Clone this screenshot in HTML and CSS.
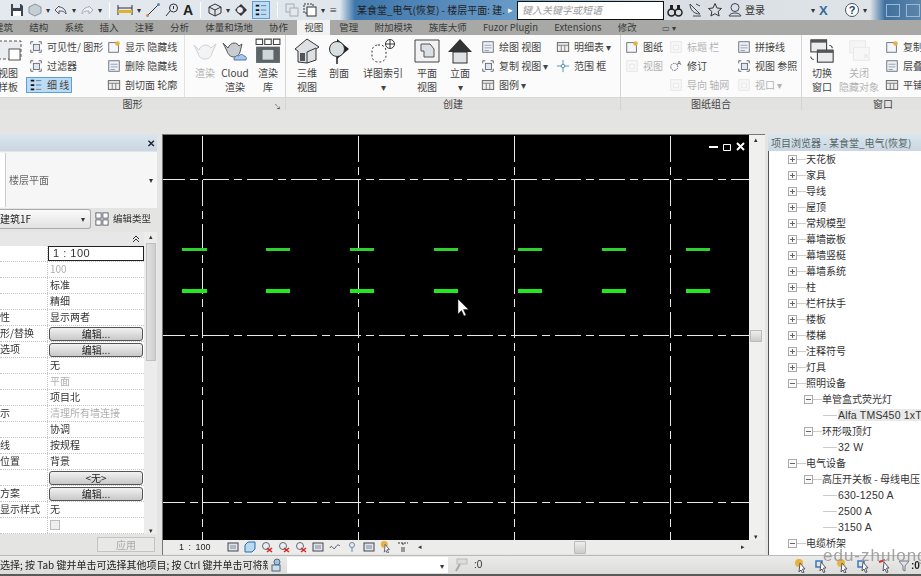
FILE: index.html
```html
<!DOCTYPE html>
<html lang="zh">
<head>
<meta charset="utf-8">
<title>Revit</title>
<link rel="stylesheet" href="styles.css">
</head>
<body>
<svg class="defs" width="0" height="0">
  <symbol id="doc" viewBox="0 0 16 16"><rect x="2" y="2" width="12" height="12" fill="#eef2f6" stroke="#667"/><path d="M4 6h8M4 9h8M4 12h5" stroke="#89a" fill="none"/></symbol>
  <symbol id="docy" viewBox="0 0 16 16"><rect x="2" y="3" width="11" height="11" fill="#f4f6f8" stroke="#667"/><circle cx="12" cy="4" r="2.6" fill="#e8b23c"/></symbol>
  <symbol id="docd" viewBox="0 0 16 16"><rect x="2" y="2" width="12" height="12" fill="#f5f5f5" stroke="#c4c4c4"/><path d="M5 6h6v5H5z" fill="none" stroke="#ccc"/></symbol>
  <symbol id="frame" viewBox="0 0 16 16"><path d="M2 5V2h3M11 2h3v3M14 11v3h-3M5 14H2v-3" fill="none" stroke="#556"/><rect x="5" y="5" width="7" height="7" fill="#dfe7ee" stroke="#667"/></symbol>
  <symbol id="lines" viewBox="0 0 16 16"><path d="M2 3h4M2 8h4M2 13h4" stroke="#111" stroke-width="2"/><path d="M8 3h6M8 8h6M8 13h6" stroke="#579" /></symbol>
  <symbol id="table" viewBox="0 0 16 16"><rect x="1.500" y="3" width="13" height="10" fill="#eee" stroke="#555"/><path d="M1.500 6h13M6 6v7M10 6v7" stroke="#777"/></symbol>
  <symbol id="teapot" viewBox="0 0 26 22"><path d="M2 5l5 5c1-3 4-5 6-5s5 1 6 3l5-4-4 9c-1 4-3 6-7 6s-6-2-7-6z" fill="#e4e8ea" stroke="#8a9296"/></symbol>
  <symbol id="teapotc" viewBox="0 0 26 24"><path d="M1 4l5 5c1-3 4-5 6-5s4 1 5 3l3-2-2 8c-1 3-3 5-6 5s-6-2-7-6z" fill="#c6ccd0" stroke="#555"/><path d="M12 20c1-3 3-4 5-3 1-2 4-2 5 0 2 0 3 2 2 4H12z" fill="#a9c6ea" stroke="#57a"/></symbol>
  <symbol id="lib" viewBox="0 0 24 24"><path d="M1 1h6v5H1zM9 1h6v5H9zM17 1h6v5h-6z" fill="#fff" stroke="#444"/><rect x="1" y="8" width="22" height="15" fill="#5d6468"/><rect x="7" y="11" width="10" height="9" fill="#cfd6da"/></symbol>
  <symbol id="house" viewBox="0 0 26 26"><path d="M13 1L1 11l3 2v11l9 1 9-3V11l3-2z" fill="#dde1e3" stroke="#333"/><path d="M13 14v11M13 14l9-4" stroke="#333" fill="none"/><rect x="6" y="15" width="5" height="8" fill="#555"/></symbol>
  <symbol id="section" viewBox="0 0 24 26"><path d="M10 1l12 10-12 10z" fill="#222"/><circle cx="10" cy="11" r="7.500" fill="#d9dee0" stroke="#333"/><path d="M10 19v7" stroke="#222" stroke-width="1.500"/></symbol>
  <symbol id="callout" viewBox="0 0 26 26"><rect x="2" y="7" width="14" height="17" rx="6" fill="none" stroke="#333" stroke-dasharray="2 2"/><circle cx="20" cy="6" r="4.500" fill="#fff" stroke="#333"/><path d="M15.500 6h9M20 2v8" stroke="#333"/></symbol>
  <symbol id="plan" viewBox="0 0 26 24"><path d="M1 1h24v22H1z" fill="#f2f2f2" stroke="#444"/><path d="M7 5h9l4 5v8H10v-6H7z" fill="#d9dfe4" stroke="#555"/></symbol>
  <symbol id="elev" viewBox="0 0 26 26"><path d="M13 1L1 14h5v11h14V14h5z" fill="#333"/><rect x="6" y="14" width="14" height="11" fill="#dfe3e6" stroke="#333"/></symbol>
  <symbol id="switch" viewBox="0 0 28 28"><rect x="2" y="2" width="17" height="13" fill="#e9edf0" stroke="#222"/><rect x="2" y="2" width="17" height="3" fill="#555"/><rect x="9" y="13" width="17" height="13" fill="#e9edf0" stroke="#222"/><rect x="9" y="13" width="17" height="3" fill="#555"/><path d="M22 8c2 0 3 1 3 3M2 20c0 2 1 3 3 3" fill="none" stroke="#111"/></symbol>
  <symbol id="closew" viewBox="0 0 28 28"><rect x="4" y="3" width="17" height="13" fill="#eee" stroke="#ccc"/><rect x="8" y="10" width="17" height="14" fill="#f2f2f2" stroke="#ccc"/><path d="M19 17l5 5M24 17l-5 5" stroke="#bbb"/></symbol>
  <symbol id="plus" viewBox="0 0 9 9"><rect x=".5" y=".5" width="8" height="8" fill="#fafafa" stroke="#aaa"/><path d="M2 4.500h5M4.500 2v5" stroke="#666"/></symbol>
  <symbol id="minus" viewBox="0 0 9 9"><rect x=".5" y=".5" width="8" height="8" fill="#fafafa" stroke="#aaa"/><path d="M2 4.500h5" stroke="#666"/></symbol>
  <symbol id="cursor" viewBox="0 0 14 14"><circle cx="5" cy="4" r="4" fill="#e8b23c"/><path d="M6 4l5 6H8.500L10 13.500l-1.500.5L7 11l-2 2z" fill="#fff" stroke="#556"/></symbol>
  <symbol id="cursorb" viewBox="0 0 14 14"><path d="M1 2h6v6H1z" fill="none" stroke="#3a78c4" stroke-width="1.500"/><path d="M6 3l5 6H8.500L10 13l-1.500.5L7 10l-2 2z" fill="#fff" stroke="#556"/></symbol>
  <symbol id="cursorr" viewBox="0 0 14 14"><path d="M1 3l6-2" stroke="#c33" stroke-width="2"/><path d="M6 3l5 6H8.500L10 13l-1.500.5L7 10l-2 2z" fill="#fff" stroke="#556"/></symbol>
  <symbol id="vb" viewBox="0 0 12 12"><rect x="1" y="2" width="10" height="8" fill="#dde4ea" stroke="#445"/><path d="M3 5h6M3 7h6" stroke="#889"/></symbol>
  <symbol id="vbx" viewBox="0 0 12 12"><circle cx="5" cy="5" r="3.500" fill="#e9eef2" stroke="#667"/><path d="M6 7l5 4M11 7l-5 4" stroke="#d22" stroke-width="1.500"/></symbol>
</svg>

<header class="titlebar">
  <div class="qat">
    <svg class="i14" viewBox="0 0 14 14"><path d="M1 1h10l2 2v10H1z" fill="#3d4650"/><rect x="3" y="1" width="7" height="4" fill="#dfe6ec"/><rect x="3" y="8" width="8" height="5" fill="#fff"/></svg>
    <svg class="i14" viewBox="0 0 14 14"><path d="M7 1l6 3v6l-6 3-6-3V4z" fill="#c6ced4" stroke="#8a949c"/></svg>
    <span class="dot">▾</span>
    <svg class="i14" viewBox="0 0 14 14"><path d="M5 3L1 7l4 4V8c3 0 5 0 7 3 0-4-3-7-7-7z" fill="#e8edf1" stroke="#556"/></svg>
    <span class="dot">▾</span>
    <svg class="i14" viewBox="0 0 14 14"><path d="M9 3l4 4-4 4V8c-3 0-5 0-7 3 0-4 3-7 7-7z" fill="#eef1f4" stroke="#aab"/></svg>
    <span class="dot">▾</span>
    <span class="qsep"></span>
    <svg class="i16" viewBox="0 0 16 16"><path d="M1 3v10M15 3v10M1 6h14" stroke="#333" fill="none"/><rect x="1" y="8" width="14" height="3" fill="#e0b030"/></svg>
    <span class="dot">▾</span>
    <svg class="i16" viewBox="0 0 16 16"><path d="M2 14L14 2" stroke="#333"/><circle cx="2.500" cy="13.500" r="1.500" fill="#d84"/><circle cx="13.500" cy="2.500" r="1.500" fill="#68a"/></svg>
    <svg class="i14" viewBox="0 0 14 14"><circle cx="8.500" cy="5" r="4" fill="none" stroke="#333"/><path d="M5 8l-4 5" stroke="#333"/><path d="M8.500 3v3" stroke="#333"/></svg>
    <span class="qa">A</span>
    <span class="qsep"></span>
    <svg class="i14" viewBox="0 0 14 14"><path d="M7 1l6 3v6l-6 3-6-3V4z" fill="#e0e4e8" stroke="#333"/><path d="M1 4l6 3 6-3M7 7v6" stroke="#333" fill="none"/></svg>
    <span class="dot">▾</span>
    <svg class="i14" viewBox="0 0 14 14"><path d="M7 1l6 6-6 6-6-6z" fill="#333"/><circle cx="6" cy="7" r="3.500" fill="#eee" stroke="#333"/></svg>
    <span class="qon"><svg class="i14" viewBox="0 0 16 16"><use href="#lines"/></svg></span>
    <span class="qsep"></span>
    <svg class="i14" viewBox="0 0 14 14"><rect x="1" y="1" width="8" height="8" fill="none" stroke="#aab"/><rect x="5" y="5" width="8" height="8" fill="#e4e8ea" stroke="#aab"/></svg>
    <svg class="i14" viewBox="0 0 14 14"><rect x="1" y="1" width="9" height="9" fill="none" stroke="#333" stroke-dasharray="2 1"/><rect x="4" y="4" width="9" height="9" fill="#fff" stroke="#333"/></svg>
    <span class="dot">▾</span>
    <span class="dot">≡</span>
  </div>
  <div class="wintitle">某食堂_电气(恢复) - 楼层平面: 建...</div>
  <div class="search">
    <span class="tri">▸</span>
    <div class="searchbox">键入关键字或短语</div>
  </div>
  <div class="tright">
    <svg class="i16" viewBox="0 0 16 16"><circle cx="4.500" cy="10.500" r="3.500" fill="none" stroke="#222" stroke-width="1.500"/><circle cx="11.500" cy="10.500" r="3.500" fill="none" stroke="#222" stroke-width="1.500"/><path d="M3 3h3v5H3zM10 3h3v5h-3z" fill="#222"/></svg>
    <svg class="i16" viewBox="0 0 16 16"><path d="M3 2c0 6 4 10 10 10z" fill="none" stroke="#445"/><path d="M6 14h8M9 2l4 2" stroke="#445"/></svg>
    <svg class="i16" viewBox="0 0 16 16"><path d="M8 1.500l2 4.500 4.500.5-3.400 3 1 4.500L8 11.700 3.900 14l1-4.500-3.400-3L6 6z" fill="none" stroke="#333"/></svg>
    <svg class="i16" viewBox="0 0 16 16"><circle cx="8" cy="5.500" r="4" fill="none" stroke="#445"/><path d="M2 14c1-4 11-4 12 0z" fill="none" stroke="#445"/></svg>
    <span class="login">登录</span>
    <span class="dot">▾</span>
    <span class="xlogo">X</span>
    <span class="help">?</span>
    <span class="dot">▾</span>
  </div>
  <div class="winbtns"><span class="winmin"></span><span class="winmax"></span></div>
</header>

<nav class="tabs">
  <span>建筑</span><span>结构</span><span>系统</span><span>插入</span><span>注释</span><span>分析</span><span>体量和场地</span><span>协作</span><span class="tab-on">视图</span><span>管理</span><span>附加模块</span><span>族库大师</span><span>Fuzor Plugin</span><span>Extensions</span><span>修改</span><span class="tabopt">▭ ▾</span>
</nav>

<section class="ribbon">
  <div class="panel p-graphics">
    <div class="pbody">
      <div class="big w-tpl"><svg class="bigi" viewBox="0 0 26 26"><rect x="1" y="3" width="22" height="18" fill="#e9edf0" stroke="#555" stroke-dasharray="3 2"/><rect x="11" y="11" width="11" height="11" fill="#fff" stroke="#555"/></svg><span>视图<br>样板</span></div>
      <div class="col w-vis">
        <div class="it"><svg class="i14"><use href="#frame"/></svg>可见性/ 图形</div>
        <div class="it"><svg class="i14"><use href="#frame"/></svg>过滤器</div>
        <div class="it it-on"><svg class="i14"><use href="#lines"/></svg>细 线</div>
      </div>
      <div class="col w-hid">
        <div class="it"><svg class="i14"><use href="#docy"/></svg>显示 隐藏线</div>
        <div class="it"><svg class="i14"><use href="#doc"/></svg>删除 隐藏线</div>
        <div class="it"><svg class="i14"><use href="#table"/></svg>剖切面 轮廓</div>
      </div>
      <span class="vsep"></span>
      <div class="big w-r1 off"><svg class="bigi" viewBox="0 0 26 22"><use href="#teapot"/></svg><span>渲染</span></div>
      <div class="big w-r2"><svg class="bigi" viewBox="0 0 26 24"><use href="#teapotc"/></svg><span>Cloud<br>渲染</span></div>
      <div class="big w-r3"><svg class="bigi" viewBox="0 0 24 24"><use href="#lib"/></svg><span>渲染<br>库</span></div>
    </div>
    <div class="plabel lab-graphics">图形<i class="launch">↘</i></div>
  </div>
  <div class="panel p-create">
    <div class="pbody">
      <div class="big w-3d"><svg class="bigi" viewBox="0 0 26 26"><use href="#house"/></svg><span>三维<br>视图</span></div>
      <div class="big w-sec"><svg class="bigi" viewBox="0 0 24 26"><use href="#section"/></svg><span>剖面</span></div>
      <div class="big w-call"><svg class="bigi" viewBox="0 0 26 26"><use href="#callout"/></svg><span>详图索引<br>▾</span></div>
      <div class="big w-plan"><svg class="bigi" viewBox="0 0 26 24"><use href="#plan"/></svg><span>平面<br>视图</span></div>
      <div class="big w-elev"><svg class="bigi" viewBox="0 0 26 26"><use href="#elev"/></svg><span>立面<br>▾</span></div>
      <div class="col w-draw">
        <div class="it"><svg class="i14"><use href="#doc"/></svg>绘图 视图</div>
        <div class="it"><svg class="i14"><use href="#frame"/></svg>复制 视图 ▾</div>
        <div class="it"><svg class="i14"><use href="#table"/></svg>图例 ▾</div>
      </div>
      <div class="col w-sched">
        <div class="it"><svg class="i14"><use href="#table"/></svg>明细表 ▾</div>
        <div class="it"><svg class="i14" viewBox="0 0 16 16"><path d="M8 1v14M1 8h14" stroke="#48a"/><circle cx="8" cy="8" r="2" fill="#fff" stroke="#48a"/></svg>范围 框</div>
      </div>
    </div>
    <div class="plabel">创建</div>
  </div>
  <div class="panel p-sheet">
    <div class="pbody">
      <div class="col w-s1">
        <div class="it"><svg class="i14"><use href="#docy"/></svg>图纸</div>
        <div class="it off"><svg class="i14"><use href="#docd"/></svg>视图</div>
      </div>
      <div class="col w-s2">
        <div class="it off"><svg class="i14"><use href="#docd"/></svg>标题 栏</div>
        <div class="it"><svg class="i14" viewBox="0 0 16 16"><path d="M2 9a4 4 0 1 0 8 0a4 4 0 1 0-8 0" fill="none" stroke="#555" stroke-dasharray="2 1"/><text class="rev" x="9" y="7">A</text></svg>修订</div>
        <div class="it off"><svg class="i14"><use href="#docd"/></svg>导向 轴网</div>
      </div>
      <div class="col w-s3">
        <div class="it"><svg class="i14"><use href="#doc"/></svg>拼接线</div>
        <div class="it"><svg class="i14"><use href="#frame"/></svg>视图 参照</div>
        <div class="it off"><svg class="i14"><use href="#docd"/></svg>视口 ▾</div>
      </div>
    </div>
    <div class="plabel">图纸组合</div>
  </div>
  <div class="panel p-win">
    <div class="pbody">
      <div class="big w-sw"><svg class="bigi" viewBox="0 0 28 28"><use href="#switch"/></svg><span>切换<br>窗口</span></div>
      <div class="big w-cl off"><svg class="bigi" viewBox="0 0 28 28"><use href="#closew"/></svg><span>关闭<br>隐藏对象</span></div>
      <div class="col w-w3">
        <div class="it"><svg class="i14"><use href="#docy"/></svg>复制</div>
        <div class="it"><svg class="i14"><use href="#doc"/></svg>层叠</div>
        <div class="it"><svg class="i14"><use href="#table"/></svg>平铺</div>
      </div>
    </div>
    <div class="plabel lab-win">窗口</div>
  </div>
</section>

<div class="band"></div>

<main class="main">
  <aside class="props">
    <div class="phead"><b class="pclose">✕</b></div>
    <div class="ptype"><span class="pthumb"></span><span class="ptname">楼层平面</span><span class="dot">▾</span></div>
    <div class="pcombo">
      <div class="combo"><span>建筑1F</span><span class="dot">▾</span></div>
      <svg class="i14" viewBox="0 0 16 16"><rect x="1" y="1" width="6" height="6" fill="#fff" stroke="#556"/><rect x="9" y="1" width="6" height="6" fill="#fff" stroke="#556"/><rect x="1" y="9" width="6" height="6" fill="#fff" stroke="#556"/><rect x="9" y="9" width="6" height="6" fill="#fff" stroke="#556"/></svg>
      <span class="etype">编辑类型</span>
    </div>
    <div class="ptable">
      <div class="rows">
        <div class="sect"><svg class="chev" viewBox="0 0 8 8"><path d="M1 4l3-3 3 3M1 7l3-3 3 3" fill="none" stroke="#333"/></svg></div>
        <div class="row"><span class="k"></span><span class="v v-box">1 : 100</span></div>
        <div class="row"><span class="k"></span><span class="v off">100</span></div>
        <div class="row"><span class="k"></span><span class="v">标准</span></div>
        <div class="row"><span class="k"></span><span class="v">精细</span></div>
        <div class="row"><span class="k">性</span><span class="v">显示两者</span></div>
        <div class="row"><span class="k">形/替换</span><span class="v"><button class="btn">编辑...</button></span></div>
        <div class="row"><span class="k">选项</span><span class="v"><button class="btn">编辑...</button></span></div>
        <div class="row"><span class="k"></span><span class="v">无</span></div>
        <div class="row"><span class="k"></span><span class="v off">平面</span></div>
        <div class="row"><span class="k"></span><span class="v">项目北</span></div>
        <div class="row"><span class="k">示</span><span class="v off">清理所有墙连接</span></div>
        <div class="row"><span class="k"></span><span class="v">协调</span></div>
        <div class="row"><span class="k">线</span><span class="v">按规程</span></div>
        <div class="row"><span class="k">位置</span><span class="v">背景</span></div>
        <div class="row"><span class="k"></span><span class="v"><button class="btn">&lt;无&gt;</button></span></div>
        <div class="row"><span class="k">方案</span><span class="v"><button class="btn">编辑...</button></span></div>
        <div class="row"><span class="k">显示样式</span><span class="v">无</span></div>
        <div class="row"><span class="k"></span><span class="v"><i class="check"></i></span></div>
      </div>
      <div class="vscroll"><span class="up">▴</span><span class="thumb"></span><span class="dn">▾</span></div>
    </div>
    <div class="pfoot"><button class="apply">应用</button></div>
  </aside>

  <section class="center">
    <div class="canvaswrap">
      <div class="canvas">
        <svg class="draw" viewBox="0 0 587 405">
          <g class="gv">
            <path d="M39.500 1V405"/><path d="M195.500 1V405"/><path d="M351.500 1V405"/><path d="M507.500 1V405"/>
          </g>
          <g class="gh">
            <path d="M0 44.500H587"/><path d="M0 200.500H587"/><path d="M0 367.500H587"/>
          </g>
          <g class="lamp1">
            <path d="M19 114.500h25M103 114.500h24M187 114.500h24M271 114.500h24M355 114.500h24M439 114.500h24M523 114.500h24"/>
          </g>
          <g class="lamp2">
            <path d="M19 156h25M103 156h24M187 156h24M271 156h24M355 156h24M439 156h24M523 156h24"/>
          </g>
          <path class="mouse" d="M295 164v15l3.500-3.500 2.500 5.500 2-1-2.500-5.500h5z"/>
          <g class="vctl">
            <path d="M546 12h9"/><path class="vthin" d="M560.500 9.500h7v6h-7z"/><path d="M574 8l7 7M581 8l-7 7"/>
          </g>
        </svg>
      </div>
      <div class="hs-v"><span class="up">▴</span><span class="vthumb"></span><span class="dn">▾</span></div>
    </div>
    <div class="viewbar">
      <span class="scale">1 : 100</span>
      <div class="vbicons">
        <svg class="i12"><use href="#vb"/></svg><svg class="i12" viewBox="0 0 12 12"><path d="M1 4l3-3h7v7l-3 3H1z" fill="#bcd7f0" stroke="#1f6fb0"/></svg><svg class="i12"><use href="#vbx"/></svg><svg class="i12"><use href="#vbx"/></svg><svg class="i12"><use href="#vbx"/></svg><svg class="i12"><use href="#vb"/></svg><svg class="i12" viewBox="0 0 12 12"><path d="M1 7c2-5 3 3 5 0s3-4 5-2" fill="none" stroke="#556"/></svg><svg class="i12" viewBox="0 0 12 12"><circle cx="6" cy="4" r="2.500" fill="none" stroke="#68a"/><path d="M6 7v4" stroke="#68a"/></svg><svg class="i12"><use href="#vb"/></svg><svg class="i12"><use href="#cursor"/></svg><svg class="i12" viewBox="0 0 12 12"><path d="M1 2h10M6 2v3" stroke="#333" stroke-dasharray="2 1"/><rect x="4" y="6" width="4" height="5" fill="#999"/></svg>
        <span class="vbarrow">◂</span>
      </div>
      <span class="hthumb"></span>
      <span class="vbright">▸</span>
    </div>
  </section>

  <aside class="browser">
    <div class="bhead">项目浏览器 - 某食堂_电气(恢复)</div>
    <div class="tree">
      <div class="n l1"><svg class="ex"><use href="#plus"/></svg><i class="ln"></i>天花板</div>
      <div class="n l1"><svg class="ex"><use href="#plus"/></svg><i class="ln"></i>家具</div>
      <div class="n l1"><svg class="ex"><use href="#plus"/></svg><i class="ln"></i>导线</div>
      <div class="n l1"><svg class="ex"><use href="#plus"/></svg><i class="ln"></i>屋顶</div>
      <div class="n l1"><svg class="ex"><use href="#plus"/></svg><i class="ln"></i>常规模型</div>
      <div class="n l1"><svg class="ex"><use href="#plus"/></svg><i class="ln"></i>幕墙嵌板</div>
      <div class="n l1"><svg class="ex"><use href="#plus"/></svg><i class="ln"></i>幕墙竖梃</div>
      <div class="n l1"><svg class="ex"><use href="#plus"/></svg><i class="ln"></i>幕墙系统</div>
      <div class="n l1"><svg class="ex"><use href="#plus"/></svg><i class="ln"></i>柱</div>
      <div class="n l1"><svg class="ex"><use href="#plus"/></svg><i class="ln"></i>栏杆扶手</div>
      <div class="n l1"><svg class="ex"><use href="#plus"/></svg><i class="ln"></i>楼板</div>
      <div class="n l1"><svg class="ex"><use href="#plus"/></svg><i class="ln"></i>楼梯</div>
      <div class="n l1"><svg class="ex"><use href="#plus"/></svg><i class="ln"></i>注释符号</div>
      <div class="n l1"><svg class="ex"><use href="#plus"/></svg><i class="ln"></i>灯具</div>
      <div class="n l1"><svg class="ex"><use href="#minus"/></svg><i class="ln"></i>照明设备</div>
      <div class="n l2"><svg class="ex"><use href="#minus"/></svg><i class="ln"></i>单管盒式荧光灯</div>
      <div class="n l3"><i class="ln ln3"></i><span class="sel">Alfa TMS450 1xTL5 - 14 W</span></div>
      <div class="n l2"><svg class="ex"><use href="#minus"/></svg><i class="ln"></i>环形吸顶灯</div>
      <div class="n l3"><i class="ln ln3"></i>32 W</div>
      <div class="n l1"><svg class="ex"><use href="#minus"/></svg><i class="ln"></i>电气设备</div>
      <div class="n l2"><svg class="ex"><use href="#minus"/></svg><i class="ln"></i>高压开关板 - 母线电压</div>
      <div class="n l3"><i class="ln ln3"></i>630-1250 A</div>
      <div class="n l3"><i class="ln ln3"></i>2500 A</div>
      <div class="n l3"><i class="ln ln3"></i>3150 A</div>
      <div class="n l1"><svg class="ex"><use href="#minus"/></svg><i class="ln"></i>电缆桥架</div>
    </div>
  </aside>
</main>

<footer class="status">
  <span class="stext">选择; 按 Tab 键并单击可选择其他项目; 按 Ctrl 键并单击可将新</span>
  <svg class="i14" viewBox="0 0 14 14"><circle cx="9" cy="4" r="3" fill="#9bc3e8" stroke="#567"/><rect x="4" y="7" width="8" height="6" fill="#cde" stroke="#567"/></svg>
  <div class="sinput"><span class="dot">▾</span></div>
  <svg class="i14 sfilter" viewBox="0 0 14 14"><rect x="3" y="1" width="10" height="5" fill="#ddd" stroke="#bbb"/><path d="M2 13l4-7" stroke="#aaa" stroke-width="2"/></svg>
  <span class="zero">:0</span>
  <div class="sright">
    <svg class="i14"><use href="#cursor"/></svg>
    <svg class="i14"><use href="#cursorb"/></svg>
    <svg class="i14"><use href="#cursor"/></svg>
    <svg class="i14"><use href="#cursorb"/></svg>
    <svg class="i14"><use href="#cursorr"/></svg>
    <svg class="i10" viewBox="0 0 10 12"><path d="M0 1h10L6 6v5L4 10V6z" fill="#dfe3e6" stroke="#778"/></svg>
    <span class="zero0">:0</span>
  </div>
</footer>
<div class="base"></div>
<span class="water">edu-zhulong</span>
</body>
</html>
```

FILE: styles.css
```css
* { box-sizing: border-box; }
html, body { margin: 0; padding: 0; }
body {
  width: 921px; height: 576px; overflow: hidden; position: relative;
  background: #e4e4e2; color: #333;
  font: 10px/1.2 "Noto Sans CJK SC", "Liberation Sans", sans-serif;
  filter: blur(.35px);
}
.defs { position: absolute; }
svg { display: block; flex: none; }
.i10 { width: 10px; height: 12px; }
.i12 { width: 12px; height: 12px; }
.i14 { width: 14px; height: 14px; }
.i16 { width: 16px; height: 16px; }
.dot { font-size: 8px; color: #333; }
.off { opacity: .4; }

/* title bar */
.titlebar {
  height: 20px; display: flex; align-items: center; overflow: hidden;
  background: linear-gradient(90deg, #e3e9ee 0, #dfe6ec 340px, #3e76ab 355px, #6a9cc8 520px, #d8dee4 664px, #dfe4e8 870px, #3e6f9f 885px, #5c85ab 921px);
}
.qat { width: 355px; flex: none; display: flex; align-items: center; gap: 4px; padding-left: 10px; overflow: hidden; }
.qsep { width: 1px; height: 16px; background: #fff; margin: 0 3px; }
.qa { font: bold 14px "Liberation Sans", sans-serif; color: #222; }
.qon { background: #bfdcf5; border: 1px solid #5d9bd0; display: flex; padding: 1px; }
.wintitle { width: 150px; flex: none; padding-left: 2px; white-space: nowrap; overflow: hidden; color: #222; }
.search { width: 159px; flex: none; display: flex; align-items: center; gap: 4px; color: #223; padding-left: 3px; }
.tri { font-size: 9px; color: #fff; }
.searchbox { flex: 1; height: 19px; background: #fff; border: 1px solid #111; font-style: italic; color: #999; padding: 2px 4px; }
.tright { flex: none; width: 216px; display: flex; align-items: center; gap: 4px; padding-left: 3px; }
.login { width: 62px; margin-left: -2px; }
.xlogo { font: bold 13px "Liberation Sans", sans-serif; color: #356a9c; width: 22px; text-align: left; }
.help { width: 14px; height: 14px; border-radius: 50%; border: 1px solid #456; text-align: center; font: bold 11px/12px "Liberation Sans", sans-serif; color: #246; background: #fff; }
.winbtns { flex: 1; display: flex; align-items: center; gap: 6px; padding-left: 6px; }
.winmin { width: 14px; height: 13px; border: 1px solid #9fb8cf; }
.winmax { width: 14px; height: 13px; border: 1px solid #9fb8cf; }

/* tabs */
.tabs {
  height: 15px; display: flex; align-items: center; gap: 16.2px; margin-left: -6px; width: 927px;
  background: #a8a9a6; color: #3a3a3a; white-space: nowrap; font-size: 9.5px;
}
.tabs span { flex: none; }
.tab-on { background: #f2f2f2; height: 15px; line-height: 15px; padding: 0 7px; margin: 0 -7px; }
.tabopt { margin-left: 9px; font-size: 8px; }

/* ribbon */
.ribbon { height: 75px; display: flex; background: #f6f6f6; overflow: hidden; }
.panel { flex: none; display: flex; flex-direction: column; border-right: 1px solid #d4d4d4; }
.p-graphics { width: 286px; }
.p-create { width: 335px; }
.p-sheet { width: 181px; }
.p-win { flex: 1; border-right: 0; }
.pbody { height: 62px; display: flex; flex: none; background: #fbfbfb; }
.plabel { height: 13px; background: #e2e2e1; border-top: 1px solid #d8d8d8; text-align: center; line-height: 12px; color: #444; position: relative; }
.lab-graphics { padding-right: 20px; }
.lab-win { text-align: left; padding-left: 71px; }
.launch { position: absolute; right: 4px; top: 2px; font-size: 7px; font-style: normal; }
.vsep { width: 1px; background: #e2e2e2; flex: none; margin: 0 0 0 7px; }
.col { display: flex; flex-direction: column; flex: none; padding-top: 4px; gap: 3px; }
.it { height: 16px; display: flex; align-items: center; gap: 4px; white-space: nowrap; color: #444; }
.it-on { background: #bcdcf5; border: 1px solid #5a9fd6; width: 46px; margin-left: -3px; padding-left: 2px; }
.big { flex: none; display: flex; flex-direction: column; align-items: center; padding-top: 3px; text-align: center; color: #444; line-height: 14px; white-space: nowrap; }
.bigi { width: 26px; height: 26px; margin-bottom: 2px; }
.w-tpl { width: 24px; margin-left: -2px; align-items: flex-start; }
.w-vis { width: 78px; margin-left: 7px; }
.w-hid { width: 70px; }
.w-r1 { width: 26px; margin-left: 7px; }
.w-r2 { width: 34px; }
.w-r3 { width: 32px; }
.w-3d { width: 32px; margin-left: 5px; }
.w-sec { width: 32px; }
.w-call { width: 56px; }
.w-plan { width: 32px; }
.w-elev { width: 34px; }
.w-draw { width: 75px; margin-left: 4px; }
.w-sched { width: 56px; }
.w-s1 { width: 44px; margin-left: 4px; }
.w-s2 { width: 68px; }
.w-s3 { width: 60px; }
.w-sw { width: 32px; margin-left: 4px; }
.w-cl { width: 42px; }
.w-w3 { width: 40px; margin-left: 5px; }
.rev { font: 7px "Liberation Sans", sans-serif; fill: #333; }

.band { height: 23px; background: #e4e4e2; }

/* main */
.main { height: 422px; display: flex; align-items: stretch; }
.props { width: 157px; flex: none; display: flex; flex-direction: column; overflow: hidden; }
.phead { height: 17px; margin-top: 1px; background: linear-gradient(#dbe5ec, #c9d7e2); display: flex; justify-content: flex-end; align-items: center; padding-right: 2px; flex: none; }
.pclose { font-size: 10px; color: #223; }
.ptype { height: 56px; margin-top: 1px; background: #f6f6f6; display: flex; align-items: center; padding-right: 4px; flex: none; }
.pthumb { width: 6px; height: 54px; background: #fff; border-right: 1px solid #ccc; flex: none; }
.ptname { flex: 1; padding-left: 3px; color: #666; }
.pcombo { height: 24px; padding-bottom: 2px; display: flex; align-items: center; gap: 4px; flex: none; }
.combo { width: 91px; height: 20px; background: linear-gradient(#fafafa, #e2e2e2); border: 1px solid #aaa; border-left: 0; border-radius: 0 3px 3px 0; display: flex; justify-content: space-between; align-items: center; padding-right: 5px; color: #222; }
.etype { color: #333; font-size: 9.5px; white-space: nowrap; }
.ptable { flex: 1; display: flex; min-height: 0; }
.rows { width: 144px; flex: none; background: #fff; }
.sect { height: 14px; background: #e7e7e7; display: flex; justify-content: flex-end; align-items: center; padding-right: 4px; }
.chev { width: 8px; height: 8px; }
.row { height: 16px; display: flex; border-bottom: 1px dotted #c4c4c4; align-items: center; color: #333; }
.k { width: 48px; flex: none; height: 100%; border-right: 1px dotted #c4c4c4; line-height: 14px; white-space: nowrap; }
.v { flex: 1; padding-left: 2px; line-height: 14px; white-space: nowrap; height: 100%; }
.v-box { border: 1px solid #222; padding-left: 4px; font: 11px/13px "Liberation Sans", sans-serif; letter-spacing: .5px; }
.btn { display: block; width: 94px; height: 14px; margin: 1px 0 0 -1px; padding: 0; font: 10px/12px "Noto Sans CJK SC", sans-serif; color: #222; background: linear-gradient(#f2f2f2, #c8c8c8); border: 1px solid #555; border-radius: 3px; }
.check { display: block; width: 10px; height: 10px; border: 1px solid #bbb; background: #eee; margin-top: 2px; }
.vscroll { width: 13px; flex: none; background: #ececec; display: flex; flex-direction: column; align-items: center; font-size: 7px; color: #333; }
.thumb { width: 10px; height: 118px; background: linear-gradient(90deg, #e0e0e0, #cfcfcf); border: 1px solid #c0c0c0; margin-top: 3px; }
.dn { margin-top: auto; }
.pfoot { height: 21px; display: flex; justify-content: flex-end; align-items: center; padding-right: 2px; background: #e4e4e2; flex: none; }
.apply { width: 58px; height: 15px; border: 1px solid #c4c4c4; background: #e8e8e6; color: #aaa; font: 10px/12px "Noto Sans CJK SC", sans-serif; padding: 0; }

.center { width: 603px; flex: none; margin-left: 5px; margin-top: 1px; display: flex; flex-direction: column; border-left: 1px solid #777; border-top: 1px solid #777; }
.canvaswrap { height: 405px; display: flex; flex: none; }
.canvas { width: 586px; background: #000; flex: none; overflow: hidden; }
.draw { width: 587px; height: 405px; }
.gv path { stroke: #e8e8e8; stroke-width: 1; fill: none; stroke-dasharray: 26 5 8 5; }
.gh path { stroke: #e8e8e8; stroke-width: 1; fill: none; stroke-dasharray: 26 5 8 5; stroke-dashoffset: 4; }
.lamp1 path { stroke: #2fd12f; stroke-width: 3; fill: none; }
.lamp2 path { stroke: #22e822; stroke-width: 4; fill: none; }
.mouse { fill: #fff; stroke: #222; stroke-width: .5; }
.vctl path { stroke: #fff; stroke-width: 2; fill: none; }
.vctl .vthin { stroke-width: 1; }
.hs-v { flex: 1; display: flex; flex-direction: column; align-items: center; background: #f0f0ee; font-size: 7px; padding-right: 3px; }
.vthumb { width: 12px; height: 12px; margin-top: 187px; background: linear-gradient(#eee, #ccc); border: 1px solid #bbb; }
.viewbar { height: 14px; display: flex; align-items: center; background: #ececea; padding-left: 16px; font: 9px "Liberation Sans", sans-serif; }
.scale { width: 48px; flex: none; word-spacing: 2px; color: #222; }
.vbicons { display: flex; gap: 5px; align-items: center; width: 347px; flex: none; }
.vbarrow { margin-left: 4px; font-size: 7px; }
.hthumb { width: 12px; height: 13px; background: linear-gradient(#eee, #ccc); border: 1px solid #bbb; border-radius: 1px; flex: none; }
.vbright { margin-left: 155px; font-size: 7px; }

.browser { flex: 1; margin-left: 3px; margin-top: 1px; min-width: 0; display: flex; flex-direction: column; overflow: hidden; }
.bhead { height: 17px; background: linear-gradient(#dbe5ec, #c9d7e2); color: #566; line-height: 17px; padding-left: 3px; white-space: nowrap; flex: none; }
.tree { height: 404px; flex: none; background: #fff; border-left: 1px solid #555; overflow: hidden; }
.n { height: 16px; display: flex; align-items: center; white-space: nowrap; color: #333; }
.l1 { padding-left: 19px; }
.l2 { padding-left: 35px; }
.l3 { padding-left: 54px; font-family: "Liberation Sans", sans-serif; font-size: 10.5px; letter-spacing: .2px; }
.ex { width: 9px; height: 9px; flex: none; }
.ln { display: block; width: 9px; height: 1px; background: #ccc; flex: none; }
.ln3 { width: 14px; margin-right: 1px; }
.sel { background: #e9e9e9; font-size: 10.5px; }

/* status */
.status { height: 19px; display: flex; align-items: center; background: linear-gradient(#ebebe9, #dcdcda); position: relative; overflow: hidden; border-top: 1px solid #bbb; }
.stext { width: 268px; flex: none; overflow: hidden; white-space: nowrap; color: #222; }
.sinput { width: 161px; height: 16px; background: #fff; margin-left: 5px; text-align: right; padding-right: 4px; line-height: 16px; color: #999; flex: none; }
.sfilter { margin-left: 6px; }
.zero { margin-left: 6px; font-family: "Liberation Sans", sans-serif; }
.sright { position: absolute; right: 0; bottom: 0; display: flex; align-items: center; gap: 7px; height: 17px; }
.zero0 { font: bold 10px "Liberation Sans", sans-serif; color: #222; width: 10px; margin-left: -5px; }
.water { position: absolute; left: 823px; top: 546px; font: 17px "Liberation Sans", sans-serif; letter-spacing: 1px; color: #999; white-space: nowrap; opacity: .9; }
.base { height: 5px; background: #5a5a58; }
```
